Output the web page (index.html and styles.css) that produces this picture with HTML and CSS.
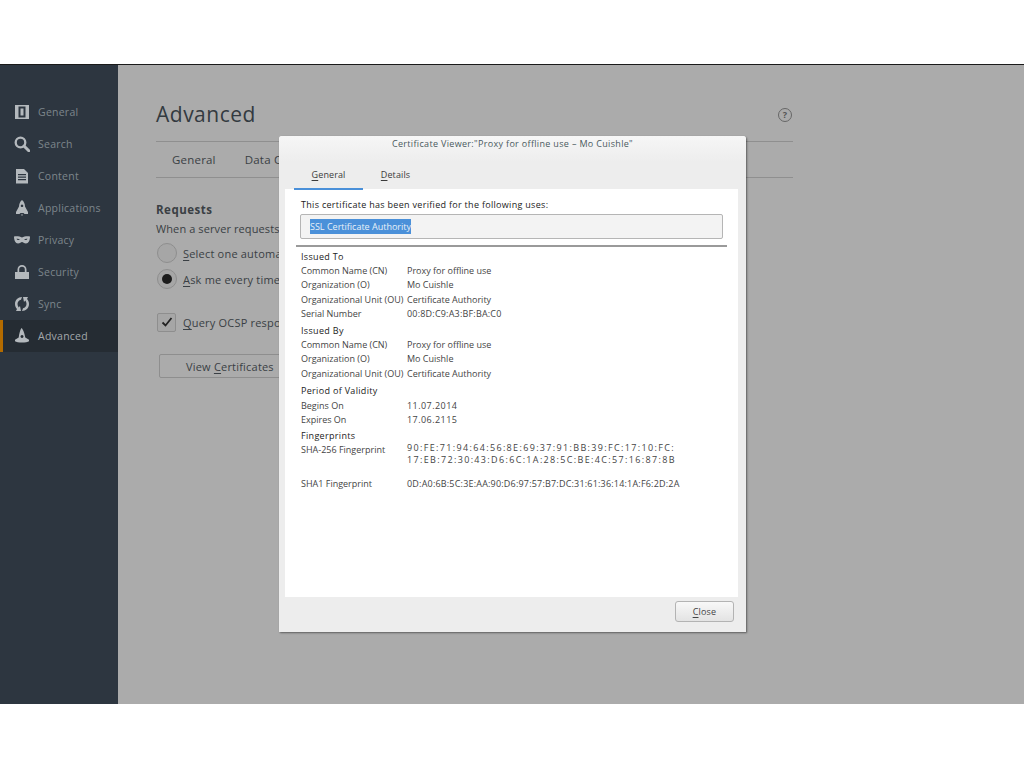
FILE: index.html
```html
<!DOCTYPE html>
<html>
<head>
<meta charset="utf-8">
<title>Advanced</title>
<link rel="stylesheet" href="styles.css">
</head>
<body>
<div class="window">
  <div class="sidebar">
    <div class="nav">
      <svg class="ico" viewBox="0 0 16 16"><path fill-rule="evenodd" d="M1 1h14v14H1zM4.500 2.500v11h7v-11zM6.500 4.500h3v7h-3z"/></svg>General
    </div>
    <div class="nav">
      <svg class="ico" viewBox="0 0 16 16"><circle cx="6.500" cy="6.500" r="4.800" fill="none" stroke="currentColor" stroke-width="2.300"/><path d="M10 10l4.800 4.800" stroke="currentColor" stroke-width="3" stroke-linecap="round"/></svg>Search
    </div>
    <div class="nav">
      <svg class="ico" viewBox="0 0 16 16"><path fill-rule="evenodd" d="M2 1h8l4 4v10.500H2zM4 6v1.200h8V6zM4 8.500v1.200h8V8.500zM4 11v1.200h8V11z"/></svg>Content
    </div>
    <div class="nav">
      <svg class="ico" viewBox="0 0 16 16"><path fill-rule="evenodd" d="M8 0c2 1.500 3 4 3 6.500l3 5.500v2h-3.500l-1-1h-3l-1 1H2v-2l3-5.500C5 4 6 1.500 8 0zM8 4.500a1.300 1.300 0 1 0 .01 0z"/><path d="M7 14.500h2L8 16z"/></svg>Applications
    </div>
    <div class="nav">
      <svg class="ico" viewBox="0 0 16 16"><path fill-rule="evenodd" d="M0 4.500c3-.5 6 0 8 1 2-1 5-1.500 8-1 0 4-1.500 7-4 7-2 0-3-1.500-4-1.500s-2 1.500-4 1.500c-2.500 0-4-3-4-7zM2.500 6.800c.5 1.200 2 1.700 3.500.8-1-.9-2.500-1.200-3.500-.8zM13.500 6.800c-.5 1.200-2 1.700-3.500.8 1-.9 2.500-1.200 3.500-.8z"/></svg>Privacy
    </div>
    <div class="nav">
      <svg class="ico" viewBox="0 0 16 16"><path fill-rule="evenodd" d="M1 8h2.500V5.500a4.500 4.500 0 0 1 9 0V8H15v7H1zM5.200 8h5.600V5.500a2.800 2.800 0 0 0-5.600 0z"/></svg>Security
    </div>
    <div class="nav">
      <svg class="ico" viewBox="0 0 16 16"><path d="M8 1C4 1 1 4 1 8c0 2 .8 3.800 2 5l-1 2h5l-1-5-1.300 1.500C4 10.500 3.500 9.300 3.500 8c0-2 1.500-3.800 3.500-4.300zM8 15c4 0 7-3 7-7 0-2-.8-3.800-2-5l1-2H9l1 5 1.300-1.500c.7 1 1.200 2.200 1.200 3.500 0 2-1.500 3.800-3.500 4.300z"/></svg>Sync
    </div>
    <div class="nav active">
      <svg class="ico" viewBox="0 0 16 16"><path fill-rule="evenodd" d="M7.500 0c1.500 1 3.300 6 3.800 9.500l3.700 2.300v1.400c-2 1.800-12 1.800-14 0v-1.400l3.700-2.300C5.200 6 6 2 7.500 0zM8 7a1.500 1.500 0 1 0 .01 0z"/></svg>Advanced
    </div>
  </div>

  <div class="main">
    <div class="title-row">
      <h1>Advanced</h1>
      <span class="help">?</span>
    </div>
    <div class="main-tabs">
      <span>General</span>
      <span>Data C</span>
    </div>
    <h2>Requests</h2>
    <p class="intro">When a server requests</p>
    <div class="opt"><span class="radio"></span><span><u>S</u>elect one automa</span></div>
    <div class="opt"><span class="radio on"></span><span><u>A</u>sk me every time</span></div>
    <div class="opt check-row">
      <span class="check"><svg viewBox="0 0 12 12" width="12" height="12"><path d="M1.500 6.500l3 3 6-7.500" fill="none" stroke="#222" stroke-width="1.800"/></svg></span>
      <span><u>Q</u>uery OCSP respo</span>
    </div>
    <button class="view-btn">View <u>C</u>ertificates</button>
  </div>
</div>

<div class="dialog">
  <div class="dialog-title">Certificate Viewer:"Proxy for offline use – Mo Cuishle"</div>
  <div class="dialog-tabs">
    <div class="dtab current"><u>G</u>eneral</div>
    <div class="dtab second"><u>D</u>etails</div>
  </div>
  <div class="panel">
    <div class="verified">This certificate has been verified for the following uses:</div>
    <div class="uses"><span class="sel">SSL Certificate Authority</span></div>
    <div class="sep"></div>

    <div class="head">Issued To</div>
    <div class="row"><span class="lbl">Common Name (CN)</span><span>Proxy for offline use</span></div>
    <div class="row"><span class="lbl">Organization (O)</span><span>Mo Cuishle</span></div>
    <div class="row"><span class="lbl">Organizational Unit (OU)</span><span>Certificate Authority</span></div>
    <div class="row"><span class="lbl">Serial Number</span><span class="num">00:8D:C9:A3:BF:BA:C0</span></div>

    <div class="head by">Issued By</div>
    <div class="row"><span class="lbl">Common Name (CN)</span><span>Proxy for offline use</span></div>
    <div class="row"><span class="lbl">Organization (O)</span><span>Mo Cuishle</span></div>
    <div class="row"><span class="lbl">Organizational Unit (OU)</span><span>Certificate Authority</span></div>

    <div class="head period">Period of Validity</div>
    <div class="row"><span class="lbl">Begins On</span><span class="date">11.07.2014</span></div>
    <div class="row"><span class="lbl">Expires On</span><span class="date">17.06.2115</span></div>

    <div class="head prints">Fingerprints</div>
    <div class="row fp"><span class="lbl">SHA-256 Fingerprint</span><span class="val-256">90:FE:71:94:64:56:8E:69:37:91:BB:39:FC:17:10:FC:<br>17:EB:72:30:43:D6:6C:1A:28:5C:BE:4C:57:16:87:8B</span></div>
    <div class="row fp1"><span class="lbl">SHA1 Fingerprint</span><span class="num">0D:A0:6B:5C:3E:AA:90:D6:97:57:B7:DC:31:61:36:14:1A:F6:2D:2A</span></div>
  </div>
  <div class="dialog-foot">
    <button class="close-btn"><u>C</u>lose</button>
  </div>
</div>
</body>
</html>
```

FILE: styles.css
```css
html,body{margin:0;padding:0;background:#fff;}
body{height:768px;overflow:hidden;padding-top:64px;box-sizing:border-box;font-family:"Open Sans","Noto Sans",sans-serif;color:#333;}
u{text-decoration:underline;text-underline-offset:2px;text-decoration-thickness:1px;}

.window{display:flex;height:640px;border-top:1px solid #1a1a1a;box-sizing:border-box;background:#ababab;overflow:hidden;}

.sidebar{width:118px;flex:none;background:#2d3640;padding-top:31px;box-sizing:border-box;}
.nav{display:flex;align-items:center;height:32px;padding-left:14px;font-size:10.500px;letter-spacing:.25px;color:#7d868c;}
.nav .ico{width:16px;height:16px;margin-right:8px;fill:#b4b9bd;color:#b4b9bd;flex:none;}
.nav.active{background:#252c33;border-left:3px solid #b36b00;padding-left:11px;color:#a3a8ac;}

.main{flex:none;width:637px;margin-left:38px;color:#3a3f44;}
.title-row{display:flex;justify-content:space-between;align-items:center;height:77px;border-bottom:1px solid #8f8f8f;box-sizing:border-box;}
h1{margin:21px 0 0;font-size:21px;font-weight:400;letter-spacing:.5px;color:#333a40;line-height:30px;}
.help{width:12px;height:12px;margin:24px 1px 0 0;border:1px solid #666;border-radius:50%;font-size:9px;line-height:12px;text-align:center;color:#555;font-weight:700;}
.main-tabs{display:flex;gap:29px;height:36px;align-items:center;padding-left:16px;border-bottom:1px solid #8f8f8f;box-sizing:border-box;font-size:11.500px;letter-spacing:.2px;}
h2{margin:24px 0 0;font-size:11.500px;font-weight:700;letter-spacing:.5px;line-height:16px;}
.intro{margin:3px 0 0;font-size:11px;letter-spacing:.1px;line-height:16px;white-space:nowrap;}
.opt{display:flex;align-items:center;gap:6px;height:26px;padding-left:1px;font-size:11px;letter-spacing:.2px;white-space:nowrap;}
.intro + .opt{margin-top:3px;}
.radio{width:18px;height:18px;border:1px solid #8e8e8e;border-radius:50%;background:#a6a6a6;position:relative;flex:none;}
.radio.on::after{content:"";position:absolute;left:4px;top:4px;width:10px;height:10px;border-radius:50%;background:#1d1d1d;}
.check-row{margin-top:17px;}
.check{width:17px;height:17px;border:1px solid #8e8e8e;border-radius:2px;background:#a6a6a6;display:flex;align-items:center;justify-content:center;flex:none;margin-right:1px;}
.view-btn{display:block;margin:19px 0 0 3px;width:150px;height:24px;padding:0 0 0 26px;text-align:left;border:1px solid #8e8e8e;border-radius:2px;background:#ababab;font:11px "Open Sans","Noto Sans",sans-serif;letter-spacing:.2px;color:#3a3f44;}

/* sits over the page, like the real modal */
.dialog{position:absolute;left:279px;top:136px;width:467px;height:496px;background:#ededed;border-radius:3px 3px 0 0;box-shadow:1px 1px 2px rgba(0,0,0,.45);display:flex;flex-direction:column;font-size:9px;color:#3b3b3b;}
.dialog-title{height:26px;padding-top:1px;box-sizing:border-box;line-height:13px;text-align:center;color:#4a5a5e;letter-spacing:.33px;background:linear-gradient(#f6f6f6,#ededed);border-radius:3px 3px 0 0;}
.dialog-tabs{display:flex;height:28px;padding-left:15px;box-sizing:border-box;}
.dtab{width:69px;height:28px;line-height:25px;text-align:center;box-sizing:border-box;letter-spacing:.1px;}
.dtab.second{width:65px;}
.dtab.current{border-bottom:2px solid #4a90d9;position:relative;z-index:1;}
.panel{margin:-1px 8px 0 6px;height:408px;background:#fff;padding:9px 0 0 16px;box-sizing:border-box;flex:none;position:relative;}
.verified{height:15px;line-height:14px;color:#222;letter-spacing:.3px;}
.uses{height:25px;width:423px;margin:1px 0 0 -1px;border:1px solid #b5b5b5;border-radius:2px;background:#f3f3f3;box-sizing:border-box;padding-left:9px;line-height:24px;}
.sel{background:#4a90d9;color:#e8f0f8;display:inline-block;line-height:15px;}
.sep{height:2px;width:431px;margin:6px 0 2px -5px;background:#9a9a9a;}
.head{height:15px;line-height:15px;color:#222;letter-spacing:.32px;}
.head.by{margin-top:1.400px;}
.head.period{margin-top:2px;height:15.700px;}
.head.prints{margin-top:.300px;}
.row{display:flex;height:14.400px;line-height:14.400px;color:#444;}
.lbl{width:106px;flex:none;white-space:nowrap;}
.num{letter-spacing:.2px;}
.date{letter-spacing:.45px;}
.row.fp{height:33px;}
.val-256{line-height:12px;margin-top:-1px;letter-spacing:1.35px;}
.row.fp1{margin-top:1px;}
.dialog-foot{flex:1;display:flex;justify-content:flex-end;align-items:flex-start;padding:4px 12px 0 0;}
.close-btn{width:59px;height:21px;padding:0;border:1px solid #b3b3b3;border-radius:3px;background:linear-gradient(#f8f8f8,#e3e3e3);font:9px "Open Sans","Noto Sans",sans-serif;letter-spacing:.2px;color:#444;}
```
